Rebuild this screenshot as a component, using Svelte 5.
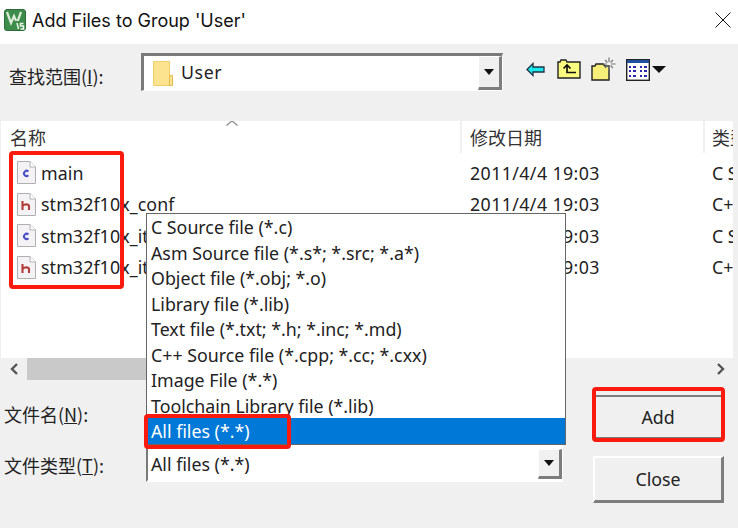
<script>
  const files = [
    { name: 'main', kind: 'c', date: '2011/4/4 19:03', type: 'C Source' },
    { name: 'stm32f10x_conf', kind: 'h', date: '2011/4/4 19:03', type: 'C++ Header' },
    { name: 'stm32f10x_it', kind: 'c', date: '2011/4/4 19:03', type: 'C Source' },
    { name: 'stm32f10x_it', kind: 'h', date: '2011/4/4 19:03', type: 'C++ Header' }
  ];

  const fileTypes = [
    'C Source file (*.c)',
    'Asm Source file (*.s*; *.src; *.a*)',
    'Object file (*.obj; *.o)',
    'Library file (*.lib)',
    'Text file (*.txt; *.h; *.inc; *.md)',
    'C++ Source file (*.cpp; *.cc; *.cxx)',
    'Image File (*.*)',
    'Toolchain Library file (*.lib)',
    'All files (*.*)'
  ];
</script>

<div class="dialog">
  <header class="titlebar">
    <svg class="app-icon" viewBox="0 0 22 22" width="22" height="22">
      <rect x="0.5" y="0.5" width="21" height="21" rx="2.5" fill="#3d8c4b" stroke="#2d6b38" />
      <path d="M3 3l4 11 3-7 3 7 4-11" fill="none" stroke="#dcebd6" stroke-width="2.2" />
      <rect x="11" y="12" width="10" height="9" fill="#3d8c4b" />
      <path d="M13 14l1.5 6M19.5 14.5h-3v2.5h3v3h-3" fill="none" stroke="#eef6ea" stroke-width="1.5" />
    </svg>
    <span class="title">Add Files to Group 'User'</span>
    <svg class="close-x" viewBox="0 0 16 16" width="16" height="16">
      <path d="M0.5 0.5l15 15M15.5 0.5l-15 15" stroke="#111" stroke-width="1" fill="none" />
    </svg>
  </header>

  <div class="toolbar">
    <span class="label look-label">查找范围(<u>I</u>):</span>
    <div class="combo look-combo">
      <svg viewBox="0 0 20 25" width="20" height="25">
        <path d="M0.5 0.5h16v24h-16z" fill="#fbe38f" stroke="#efcf6a" />
        <path d="M16.5 14.5h3v10h-3z" fill="#fbe38f" stroke="#e2bb50" />
      </svg>
      <span class="look-value">User</span>
      <span class="drop-btn"><i class="caret"></i></span>
    </div>
    <div class="tools">
      <svg class="tool-back" viewBox="0 0 19 15" width="19" height="15">
        <path d="M1 7.5L7 1.500v3.500h11v5H7v3.500z" fill="#19e8ec" stroke="#234" stroke-width="1.3" />
      </svg>
      <svg class="tool-up" viewBox="0 0 24 20" width="24" height="20">
        <path d="M1 19V3h2l1-2h5l1 2h13v16z" fill="#fbfb80" stroke="#222" stroke-width="1.4" />
        <path d="M6.500 9.500l3.500-3.500 3.500 3.500M10 6v7.500h9" fill="none" stroke="#111" stroke-width="1.7" />
      </svg>
      <svg class="tool-new" viewBox="0 0 25 24" width="25" height="24">
        <path d="M1 23V9h3l1-2h7l2 2h4v14z" fill="#f5ee78" stroke="#222" stroke-width="1.4" />
        <path d="M18 0.500v4.500M18 9v4.500M12 7h4M20 7h4.500M14 3l2.500 2.500M22 3l-2.500 2.500M14 11l2.500-2.500M22 11l-2.500-2.500" stroke="#777" stroke-width="1.2" fill="none" />
      </svg>
      <span class="view-tool">
        <svg viewBox="0 0 24 22" width="24" height="22">
          <rect x="0.7" y="0.7" width="22.6" height="20.6" fill="#fff" stroke="#222" stroke-width="1.4" />
          <rect x="1" y="1" width="22" height="3" fill="#1f4f9e" />
          <path d="M3 8h2M7 8h3M14 8h2M18 8h3M3 12h2M7 12h3M14 12h2M18 12h3M3 17h2M7 17h3M14 17h2M18 17h3" stroke="#2a2aa8" stroke-width="2.2" fill="none" />
        </svg>
        <i class="view-caret"></i>
      </span>
    </div>
  </div>

  <section class="list">
    <div class="list-head">
      <span class="col-name">名称</span>
      <span class="col-date">修改日期</span>
      <span class="col-type">类型</span>
      <svg class="sort" viewBox="0 0 12 6" width="12" height="6">
        <path d="M0.5 5.500L6 0.800l5.500 4.700" fill="none" stroke="#888" stroke-width="1.2" />
      </svg>
    </div>
    {#each files as file}
      <div class="row">
        <span class="col-name">
          <svg class="file-icon" viewBox="0 0 19 23" width="19" height="23">
            <path d="M0.5 0.500h12.500l5.500 5.500v16.500h-18z" fill="#f4f2f5" stroke="#b0b0b0" />
            <path d="M13 0.500v5.500h5.500" fill="#fff" stroke="#b0b0b0" />
            {#if file.kind === 'c'}
              <path d="M11.400 10.500a2.600 2.600 0 1 0 0 3.800" fill="none" stroke="#4a50c8" stroke-width="2" />
            {:else}
              <path d="M5.500 8v9M5.500 13c1-1.800 6.500-2.500 6.500 0v4" fill="none" stroke="#b23c3c" stroke-width="2.100" />
            {/if}
          </svg>
          {file.name}
        </span>
        <span class="col-date">{file.date}</span>
        <span class="col-type">{file.type}</span>
      </div>
    {/each}
  </section>

  <div class="hscroll">
    <svg class="chev" viewBox="0 0 10 14" width="10" height="14">
      <path d="M8 2L3 7l5 5" fill="none" stroke="#555" stroke-width="2.400" />
    </svg>
    <span class="thumb"></span>
    <svg class="chev right" viewBox="0 0 10 14" width="10" height="14">
      <path d="M2 2l5 5-5 5" fill="none" stroke="#555" stroke-width="2.400" />
    </svg>
  </div>

  <div class="footer">
    <div class="fields">
      <span class="label name-label">文件名(<u>N</u>):</span>
      <span class="label type-label">文件类型(<u>T</u>):</span>
      <div class="combo type-combo">
        <span class="combo-value">All files (*.*)</span>
        <span class="drop-btn"><i class="caret"></i></span>
      </div>
    </div>
    <div class="buttons">
      <button>Add</button>
      <button>Close</button>
    </div>
  </div>

  <ul class="dropdown">
    {#each fileTypes as type, i}
      <li class:active={i === fileTypes.length - 1}>{type}</li>
    {/each}
  </ul>

  <div class="mark mark-files"></div>
  <div class="mark mark-all"></div>
  <div class="mark mark-add"></div>
</div>

<style>
  :global(body) {
    margin: 0;
    background: #fff;
  }

  .dialog {
    position: relative;
    width: 738px;
    height: 528px;
    overflow: hidden;
    display: flex;
    flex-direction: column;
    background: #f0f0f0;
    color: #222;
    font-family: "Noto Sans", "Noto Sans CJK SC", sans-serif;
    font-size: 17.8px;
  }

  .titlebar {
    flex: 0 0 44px;
    display: flex;
    align-items: center;
    background: #fff;
    padding: 0 3px 4px 4px;
    box-sizing: border-box;
  }

  .app-icon {
    margin-right: 6px;
  }

  .title {
    font-family: "Inter", "Noto Sans", sans-serif;
    font-size: 18px;
    color: #111;
    flex: 1;
  }

  .close-x {
    margin-right: 4px;
  }

  .toolbar {
    flex: 0 0 77px;
    display: flex;
    align-items: flex-start;
    box-sizing: border-box;
    padding: 9px 0 0 9px;
  }

  .label {
    font-family: "Noto Sans CJK SC", sans-serif;
    font-size: 18px;
    color: #222;
  }

  .look-label {
    width: 132px;
    margin-top: 10px;
  }

  .combo {
    display: flex;
    align-items: center;
    background: #fff;
    box-sizing: border-box;
    border-style: solid;
    border-width: 3px 1px 1px 3px;
    border-color: #7a7a7a #fff #fff #7a7a7a;
  }

  .look-combo {
    width: 362px;
    height: 38px;
    padding-left: 9px;
    gap: 8px;
  }

  .look-value {
    flex: 1;
    letter-spacing: 0.6px;
    margin-top: -3px;
  }

  .drop-btn {
    align-self: stretch;
    width: 24px;
    display: flex;
    align-items: center;
    justify-content: center;
    background: #f0f0f0;
    box-sizing: border-box;
    border-right: 3px solid #7d7d7d;
    border-bottom: 3px solid #7d7d7d;
    border-left: 1px solid #fff;
    border-top: 1px solid #fff;
  }

  .caret {
    width: 0;
    height: 0;
    border-style: solid;
    border-width: 6px 5.5px 0;
    border-color: #111 transparent transparent;
  }

  .tools {
    display: flex;
    align-items: flex-start;
    margin-left: 23px;
    height: 34px;
  }

  .tool-back {
    margin: 9px 12px 0 0;
  }

  .tool-up {
    margin: 6px 10px 0 0;
    width: 24px;
  }

  .tool-new {
    margin: 4px 10px 0 0;
  }

  .view-tool {
    display: flex;
    align-items: center;
    gap: 2px;
    margin-top: 6px;
  }

  .view-caret {
    width: 0;
    height: 0;
    border-style: solid;
    border-width: 7px 7px 0;
    border-color: #111 transparent transparent;
    margin-top: -2px;
  }

  .list {
    flex: 0 0 237px;
    background: #fff;
    box-sizing: border-box;
    margin: 0 5px 0 1px;
    overflow: hidden;
  }

  .list-head {
    position: relative;
    height: 36px;
    padding-bottom: 4px;
    box-sizing: border-box;
    display: grid;
    grid-template-columns: 459px 243px 1fr;
    align-items: center;
    color: #333;
    font-family: "Noto Sans CJK SC", sans-serif;
    font-size: 18px;
  }

  .list-head .col-date,
  .list-head .col-type {
    align-self: stretch;
    display: flex;
    align-items: center;
    border-left: 2px solid #f0f0f0;
    padding-left: 8px;
  }

  .list-head .col-type {
    padding-left: 7px;
  }

  .sort {
    position: absolute;
    left: 225px;
    top: -1px;
  }

  .row {
    height: 31.5px;
    display: grid;
    grid-template-columns: 459px 243px 1fr;
    align-items: center;
    color: #222;
  }

  .col-name {
    display: flex;
    align-items: center;
    gap: 5px;
    padding-left: 9px;
  }

  .row .col-name {
    padding-left: 16px;
    white-space: nowrap;
    letter-spacing: 0.1px;
  }

  .file-icon {
    flex: none;
  }

  .col-date,
  .col-type {
    padding-left: 10px;
    white-space: nowrap;
    overflow: hidden;
  }

  .row .col-type {
    padding-left: 9px;
  }

  .row .col-date {
    letter-spacing: 0.4px;
  }

  .hscroll {
    flex: 0 0 24px;
    display: flex;
    align-items: flex-start;
  }

  .chev {
    width: 10px;
    margin: 4px 8px 0 9px;
  }

  .chev.right {
    margin: 4px 12px 0 auto;
  }

  .thumb {
    width: 190px;
    height: 22px;
    background: #c9c9c9;
  }

  .footer {
    flex: 1;
    display: flex;
  }

  .fields {
    width: 593px;
    position: relative;
    display: flex;
    flex-direction: column;
    padding-left: 4px;
    box-sizing: border-box;
  }

  .name-label {
    margin-top: 19px;
  }

  .type-label {
    margin-top: 25px;
  }

  .type-combo {
    position: absolute;
    left: 146px;
    top: 63px;
    width: 417px;
    height: 37px;
    padding-left: 3px;
    border-width: 0 1px 2px 2px;
    border-color: #7a7a7a #fff #fff #7a7a7a;
  }

  .combo-value {
    flex: 1;
    padding-top: 3px;
  }

  .type-combo .drop-btn {
    margin: 4px 0 1px;
  }

  .buttons {
    display: flex;
    flex-direction: column;
    gap: 16px;
    padding-top: 13px;
  }

  button {
    width: 131px;
    height: 47px;
    background: #f0f0f0;
    box-sizing: border-box;
    border-style: solid;
    border-width: 2px 3px 3px 2px;
    border-color: #fff #7d7d7d #7d7d7d #fff;
    font: inherit;
    color: #222;
    padding: 0;
  }

  .buttons button:first-child {
    height: 45px;
    border-top-color: #7d7d7d;
  }

  .dropdown {
    position: absolute;
    left: 146px;
    top: 213px;
    width: 420px;
    height: 232px;
    box-sizing: border-box;
    margin: 0;
    padding: 0;
    list-style: none;
    background: #fff;
    border: 1px solid #666;
    border-width: 1px 1px 2px 1px;
  }

  .dropdown li {
    height: 25.5px;
    line-height: 27px;
    padding-left: 4px;
    white-space: nowrap;
  }

  .dropdown li.active {
    background: #0078d7;
    color: #fff;
  }

  .mark {
    position: absolute;
    box-sizing: border-box;
    border: 4px solid #fb1a0e;
    border-radius: 4px;
  }

  .mark-files {
    left: 9px;
    top: 151px;
    width: 115px;
    height: 138px;
  }

  .mark-all {
    left: 144px;
    top: 414px;
    width: 147px;
    height: 35px;
  }

  .mark-add {
    left: 592px;
    top: 387px;
    width: 133px;
    height: 55px;
  }
</style>
